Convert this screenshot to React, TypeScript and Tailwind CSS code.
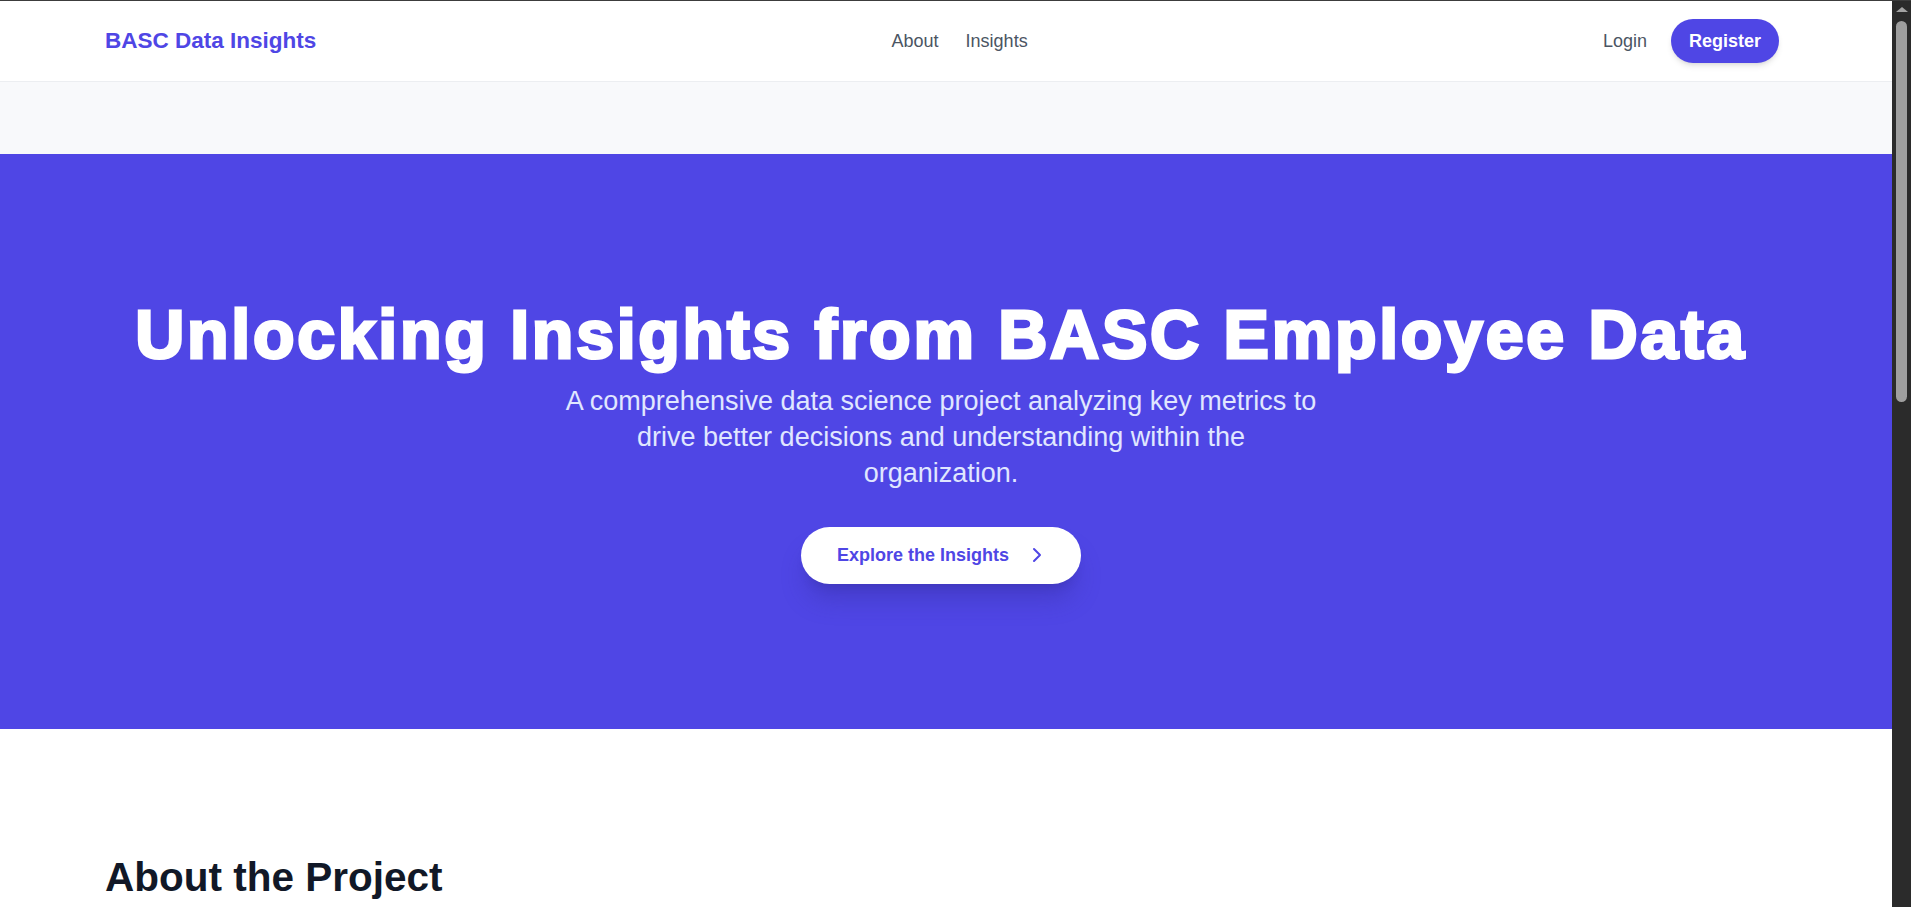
import { ChevronRight } from 'lucide-react';

const navLinks = ['About', 'Insights'];

function Header() {
  return (
    <header className="h-[81px] bg-white border-b border-[#eceef1] flex items-center justify-between pl-[105px] pr-[113px]">
      <a className="text-[22.5px] font-bold text-[#4f46e5] leading-none">BASC Data Insights</a>

      <nav className="flex items-center gap-[27px] text-[18px] text-[#4b5563]">
        {navLinks.map((l) => (
          <a key={l}>{l}</a>
        ))}
      </nav>

      <div className="flex items-center gap-6">
        <a className="text-[18px] text-[#4b5563]">Login</a>
        <button className="h-[44px] px-[18px] rounded-full bg-[#4f46e5] text-white text-[18px] font-bold shadow-md">
          Register
        </button>
      </div>
    </header>
  );
}

function Hero() {
  return (
    <section className="h-[575px] bg-[#4f46e5] flex flex-col items-center justify-center pr-[10px]">
      <h1 className="text-[68px] leading-none font-bold text-white tracking-[2.75px] [-webkit-text-stroke:3px_white]">
        Unlocking Insights from BASC Employee Data
      </h1>
      <p className="mt-[15px] max-w-[756px] text-center text-[27px] leading-[36px] text-[#e0e7ff]">
        A comprehensive data science project analyzing key metrics to drive better decisions and understanding within the organization.
      </p>
      <button className="mt-[36px] h-[57px] flex items-center gap-4 pl-[36px] pr-[32px] rounded-full bg-white text-[#4f46e5] text-[18px] font-bold shadow-xl shadow-[#3730a3]/40">
        <span>Explore the Insights</span>
        <ChevronRight size={24} strokeWidth={2} />
      </button>
    </section>
  );
}

function Scrollbar() {
  return (
    <div className="w-[19px] bg-[#2b2b2b] flex flex-col items-center">
      {/* up arrow */}
      <div className="mt-[6px] w-0 h-0 border-l-[6px] border-r-[6px] border-b-[5px] border-l-transparent border-r-transparent border-b-[#a3a3a3]" />
      <div className="mt-[9px] w-[11px] h-[381px] rounded-full bg-[#9f9f9f]" />
    </div>
  );
}

export default function App() {
  return (
    <div className="h-screen w-full overflow-hidden flex flex-col font-['Liberation_Sans',Arial,sans-serif]">
      <div className="h-px bg-[#3c3c3c] shrink-0" />
      <div className="flex-1 flex min-h-0">
        <main className="flex-1 min-w-0 overflow-hidden bg-white">
          <Header />
          <div className="h-[72px] bg-[#f8f9fb]" />
          <Hero />
          <section className="pt-[124px] pl-[105px]">
            <h2 className="text-[40.5px] leading-[1.2] font-bold text-[#111827]">About the Project</h2>
          </section>
        </main>
        <Scrollbar />
      </div>
    </div>
  );
}
